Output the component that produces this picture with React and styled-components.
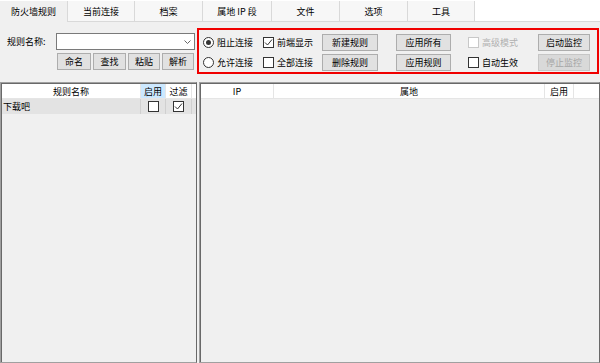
import React from 'react';
import styled, { createGlobalStyle } from 'styled-components';

const Global = createGlobalStyle`
  html, body { margin: 0; padding: 0; background: #f0f0f0; }
  body { font-family: "Noto Sans CJK SC", "Microsoft YaHei", sans-serif; font-size: 9px; color: #000; }
  * { box-sizing: border-box; }
`;

const Page = styled.div`
  width: 600px;
  height: 363px;
  overflow: hidden;
  display: flex;
  flex-direction: column;
  background: #f0f0f0;
`;

const TabStrip = styled.div`
  height: 22px;
  display: flex;
  align-items: flex-end;
  background: #fff;
  border-bottom: 1px solid #d9d9d9;
  padding-top: 2px;
`;

const Tab = styled.div`
  width: ${p => p.w}px;
  display: flex;
  align-items: center;
  justify-content: center;
  background: ${p => (p.active ? '#f0f0f0' : '#f7f7f7')};
  border-right: 1px solid #d9d9d9;
  margin-bottom: ${p => (p.active ? '-1px' : '0')};
  height: ${p => (p.active ? '21px' : '20px')};
`;

const TopArea = styled.div`
  height: 58px;
  display: flex;
`;

const LeftForm = styled.div`
  width: 197px;
  padding: 11px 0 0 7px;
  display: flex;
  flex-direction: column;
  gap: 3px;
`;

const FormRow = styled.div`
  display: flex;
  align-items: center;
  gap: 2px;
  padding-left: ${p => p.indent || 0}px;
`;

const Label = styled.span`
  width: 47px;
`;

const Combo = styled.div`
  width: 139px;
  height: 17px;
  background: #fff;
  border: 1px solid #7a7a7a;
  display: flex;
  align-items: center;
  justify-content: flex-end;
  padding-right: 3px;
  color: #606060;
`;

const Button = styled.div`
  width: ${p => p.w}px;
  height: 17px;
  display: flex;
  align-items: center;
  justify-content: center;
  background: ${p => (p.disabled ? '#d9d9d9' : '#e1e1e1')};
  border: 1px solid ${p => (p.disabled ? '#c6c6c6' : '#adadad')};
  color: ${p => (p.disabled ? '#a6a6a6' : '#000')};
`;

const RedBox = styled.div`
  margin-top: 6px;
  width: 402px;
  height: 46px;
  border: 2px solid #f00000;
  padding: 2px 0 0 4px;
  display: grid;
  grid-template-columns: 60px 59px 74px 72px 70px 52px;
  grid-template-rows: 20px 20px;
  align-items: center;
`;

const Option = styled.label`
  display: flex;
  align-items: center;
  gap: 3px;
  color: ${p => (p.disabled ? '#b0b0b0' : '#000')};
`;

const Radio = styled.span`
  width: 11px;
  height: 11px;
  border-radius: 50%;
  border: 1px solid #333;
  background: #fff;
  display: flex;
  align-items: center;
  justify-content: center;
  &::after {
    content: '';
    width: 5px;
    height: 5px;
    border-radius: 50%;
    background: ${p => (p.checked ? '#333' : 'transparent')};
  }
`;

const Box = styled.span`
  width: 11px;
  height: 11px;
  border: 1px solid ${p => (p.disabled ? '#c8c8c8' : '#333')};
  background: #fff;
  display: flex;
  align-items: center;
  justify-content: center;
  flex: none;
`;

const Check = ({ checked, disabled }) => (
  <Box disabled={disabled}>
    {checked && (
      <svg width="9" height="9" viewBox="0 0 9 9">
        <path d="M1 4.5 L3.5 7 L8 1.5" fill="none" stroke="#333" strokeWidth="1" />
      </svg>
    )}
  </Box>
);

const Lists = styled.div`
  flex: 1;
  display: flex;
  gap: 2px;
  margin-top: 2px;
`;

const ListView = styled.div`
  width: ${p => p.w}px;
  flex: ${p => (p.w ? 'none' : '1')};
  border: 1px solid #a0a0a0;
  border-right-color: #696969;
  box-shadow: inset 1px 1px 0 #696969;
  padding: 1px 0 0 1px;
  display: flex;
  flex-direction: column;
`;

const Header = styled.div`
  height: 15px;
  background: #fff;
  display: flex;
  border-bottom: 1px solid #e5e5e5;
`;

const HeadCell = styled.div`
  width: ${p => p.w}px;
  display: flex;
  align-items: center;
  justify-content: center;
  border-right: 1px solid #e5e5e5;
  background: ${p => (p.hot ? '#cce8ff' : 'transparent')};
`;

const Row = styled.div`
  height: 15px;
  display: flex;
  background: #e3e3e3;
`;

const Cell = styled.div`
  width: ${p => p.w}px;
  display: flex;
  align-items: center;
  justify-content: ${p => (p.left ? 'flex-start' : 'center')};
  padding-left: ${p => (p.left ? '1px' : '0')};
  border-right: 1px solid #d0d0d0;
`;

const tabs = [
  ['防火墙规则', 68, true],
  ['当前连接', 67],
  ['档案', 68],
  ['属地 IP 段', 69],
  ['文件', 68],
  ['选项', 68],
  ['工具', 67],
];

export default function App() {
  return (
    <Page>
      <Global />
      <TabStrip>
        {tabs.map(([t, w, a]) => (
          <Tab key={t} w={w} active={a}>{t}</Tab>
        ))}
      </TabStrip>
      <TopArea>
        <LeftForm>
          <FormRow>
            <Label>规则名称:</Label>
            <Combo>
              <svg width="7" height="4" viewBox="0 0 7 4">
                <path d="M0.5 0.5 L3.5 3.5 L6.5 0.5" fill="none" stroke="#666" strokeWidth="1" />
              </svg>
            </Combo>
          </FormRow>
          <FormRow indent={50}>
            <Button w={34}>命名</Button>
            <Button w={33}>查找</Button>
            <Button w={32}>粘贴</Button>
            <Button w={32}>解析</Button>
          </FormRow>
        </LeftForm>
        <RedBox>
          <Option><Radio checked />阻止连接</Option>
          <Option><Check checked />前端显示</Option>
          <Button w={56}>新建规则</Button>
          <Button w={55}>应用所有</Button>
          <Option disabled><Check disabled />高级模式</Option>
          <Button w={52}>启动监控</Button>
          <Option><Radio />允许连接</Option>
          <Option><Check />全部连接</Option>
          <Button w={56}>删除规则</Button>
          <Button w={55}>应用规则</Button>
          <Option><Check />自动生效</Option>
          <Button w={52} disabled>停止监控</Button>
        </RedBox>
      </TopArea>
      <Lists>
        <ListView w={197}>
          <Header>
            <HeadCell w={139}>规则名称</HeadCell>
            <HeadCell w={25} hot>启用</HeadCell>
            <HeadCell w={26}>过滤</HeadCell>
          </Header>
          <Row>
            <Cell w={139} left>下载吧</Cell>
            <Cell w={25}><Check /></Cell>
            <Cell w={26}><Check checked /></Cell>
          </Row>
        </ListView>
        <ListView>
          <Header>
            <HeadCell w={73}>IP</HeadCell>
            <HeadCell w={271}>属地</HeadCell>
            <HeadCell w={29}>启用</HeadCell>
          </Header>
        </ListView>
      </Lists>
    </Page>
  );
}
